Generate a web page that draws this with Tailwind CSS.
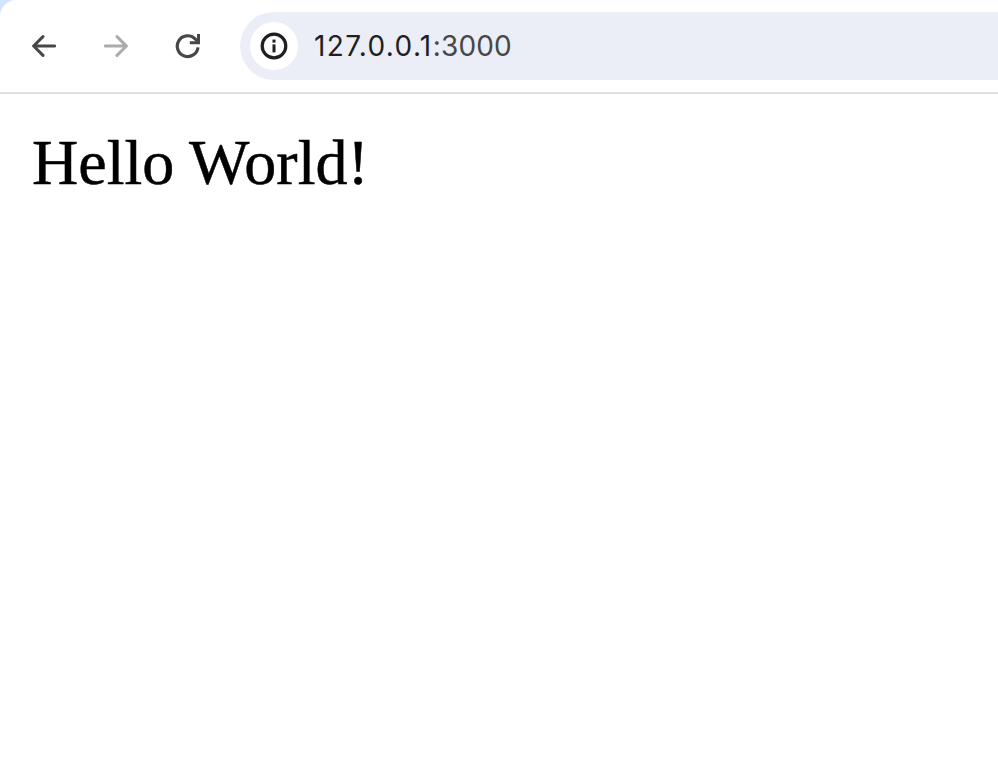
<!DOCTYPE html>
<html lang="en">
<head>
  <meta charset="UTF-8" />
  <title>127.0.0.1:3000</title>
  <script src="https://cdn.jsdelivr.net/npm/@tailwindcss/browser@4"></script>
</head>
<body class="bg-white w-[998px] h-[774px] overflow-hidden">
  <!-- toolbar -->
  <div class="bg-[#d3e3fd]">
    <div class="h-[92px] bg-white rounded-tl-[16px] flex items-center pl-[8px]">
      <button class="w-[72px] h-[72px] flex items-center justify-center">
        <svg width="24" height="24" viewBox="0 0 24 24" fill="none" stroke="#474747" stroke-width="3" stroke-linecap="round" stroke-linejoin="round"><path d="M22.6 12H2M11 2.6 1.6 12l9.4 9.4"/></svg>
      </button>
      <button class="w-[72px] h-[72px] flex items-center justify-center">
        <svg width="24" height="24" viewBox="0 0 24 24" fill="none" stroke="#ababab" stroke-width="3" stroke-linecap="round" stroke-linejoin="round"><path d="M1.4 12H22M13 2.6l9.4 9.4-9.4 9.4"/></svg>
      </button>
      <button class="w-[72px] h-[72px] flex items-center justify-center">
        <svg width="26" height="26" viewBox="0 0 26 26" fill="none"><path d="M23 14.4A10.4 10.4 0 1 1 19.8 5.6L22.8 8.4" stroke="#474747" stroke-width="3.2"/><path d="M25 1v10.2H14.8V8.2H22V1z" fill="#474747"/></svg>
      </button>
      <div class="ml-[16px] flex-1 h-[68px] bg-[#ebeef6] rounded-l-full flex items-center pl-[10px]">
        <div class="w-[48px] h-[48px] rounded-full bg-white flex items-center justify-center">
          <svg width="28" height="28" viewBox="0 0 28 28" fill="none"><circle cx="14" cy="14" r="11.8" stroke="#1f1f1f" stroke-width="3.2"/><rect x="12.5" y="12.4" width="3" height="8" fill="#1f1f1f"/><rect x="12.5" y="7.6" width="3" height="3" fill="#1f1f1f"/></svg>
        </div>
        <span class="ml-[16px] font-['Inter',sans-serif] text-[28px] tracking-[1.35px] text-[#1f1f1f]">127.0.0.1<span class="text-[#474747] tracking-[0.2px]">:3000</span></span>
      </div>
    </div>
  </div>
  <div class="h-[2px] bg-[#e0e0e0]"></div>
  <!-- page -->
  <h1 class="mt-[32px] ml-[32px] font-['Liberation_Serif',serif] text-[64px] leading-[74px] text-black [-webkit-text-stroke:0.5px_black]">Hello World!</h1>
</body>
</html>
